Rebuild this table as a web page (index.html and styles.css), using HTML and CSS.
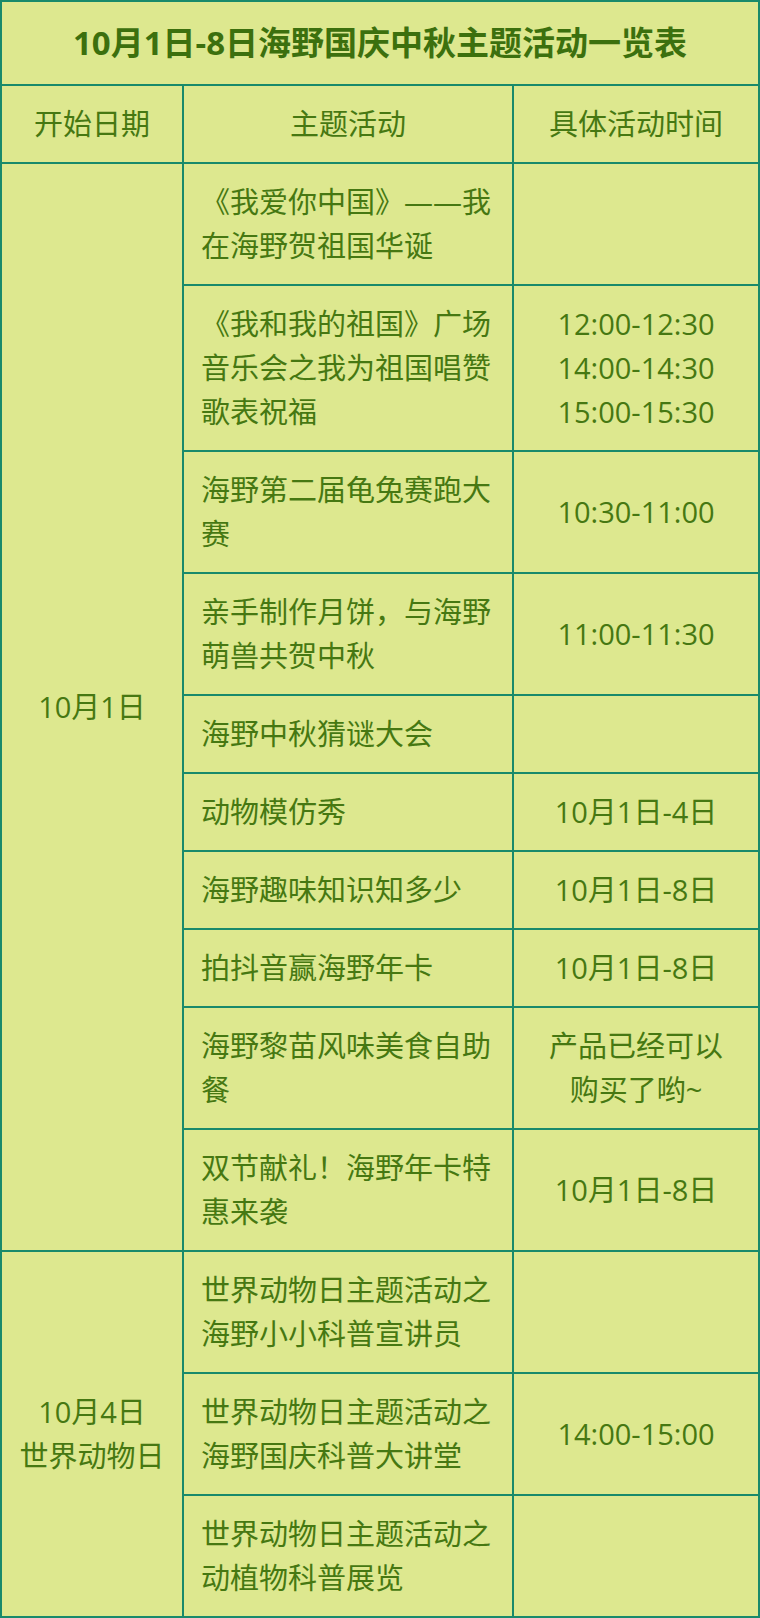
FILE: index.html
```html
<!DOCTYPE html>
<html lang="zh-CN">
<head>
<meta charset="utf-8">
<title>10月1日-8日海野国庆中秋主题活动一览表</title>
<link rel="stylesheet" href="styles.css">
</head>
<body>
<table class="schedule">
  <colgroup>
    <col class="col-date">
    <col class="col-event">
    <col class="col-time">
  </colgroup>
  <thead>
    <tr><th colspan="3" class="title">10月1日-8日海野国庆中秋主题活动一览表</th></tr>
    <tr class="head">
      <th>开始日期</th>
      <th>主题活动</th>
      <th>具体活动时间</th>
    </tr>
  </thead>
  <tbody>
    <tr>
      <td rowspan="10" class="date">10月1日</td>
      <td class="event">《我爱你中国》——我在海野贺祖国华诞</td>
      <td class="time"></td>
    </tr>
    <tr>
      <td class="event">《我和我的祖国》广场音乐会之我为祖国唱赞歌表祝福</td>
      <td class="time">12:00-12:30<br>14:00-14:30<br>15:00-15:30</td>
    </tr>
    <tr>
      <td class="event">海野第二届龟兔赛跑大赛</td>
      <td class="time">10:30-11:00</td>
    </tr>
    <tr>
      <td class="event">亲手制作月饼，与海野萌兽共贺中秋</td>
      <td class="time">11:00-11:30</td>
    </tr>
    <tr>
      <td class="event">海野中秋猜谜大会</td>
      <td class="time"></td>
    </tr>
    <tr>
      <td class="event">动物模仿秀</td>
      <td class="time">10月1日-4日</td>
    </tr>
    <tr>
      <td class="event">海野趣味知识知多少</td>
      <td class="time">10月1日-8日</td>
    </tr>
    <tr>
      <td class="event">拍抖音赢海野年卡</td>
      <td class="time">10月1日-8日</td>
    </tr>
    <tr>
      <td class="event">海野黎苗风味美食自助餐</td>
      <td class="time">产品已经可以<br>购买了哟~</td>
    </tr>
    <tr>
      <td class="event">双节献礼！海野年卡特惠来袭</td>
      <td class="time">10月1日-8日</td>
    </tr>
    <tr>
      <td rowspan="3" class="date">10月4日<br>世界动物日</td>
      <td class="event">世界动物日主题活动之海野小小科普宣讲员</td>
      <td class="time"></td>
    </tr>
    <tr>
      <td class="event">世界动物日主题活动之海野国庆科普大讲堂</td>
      <td class="time">14:00-15:00</td>
    </tr>
    <tr>
      <td class="event">世界动物日主题活动之动植物科普展览</td>
      <td class="time"></td>
    </tr>
  </tbody>
</table>
</body>
</html>
```

FILE: styles.css
```css
html, body {
  margin: 0;
  padding: 0;
  background: #dde88f;
}

body {
  font-family: "Open Sans", "Noto Sans CJK SC", sans-serif;
  color: #467812;
}

.schedule {
  width: 760px;
  table-layout: fixed;
  border-collapse: separate;
  border-spacing: 0;
  border-top: 2px solid #188a6b;
  border-left: 2px solid #188a6b;
  background: #dde88f;
}

.col-date { width: 182px; }
.col-event { width: 330px; }
.col-time { width: 246px; }

.schedule th,
.schedule td {
  border-right: 2px solid #188a6b;
  border-bottom: 2px solid #188a6b;
  padding: 16px 16px;
  font-size: 29px;
  line-height: 44px;
  font-weight: 400;
  vertical-align: middle;
  text-align: center;
}

.schedule th.title {
  padding: 17px 4px;
  font-size: 33px;
  line-height: 48px;
  font-weight: 700;
  color: #3c700e;
}

.head th {
  padding-left: 8px;
  padding-right: 8px;
}

.schedule td.date {
  padding-left: 4px;
  padding-right: 4px;
}

.schedule td.event {
  text-align: left;
  padding-left: 17px;
  padding-right: 15px;
}

.schedule td.time {
  padding-left: 8px;
  padding-right: 8px;
}
```
